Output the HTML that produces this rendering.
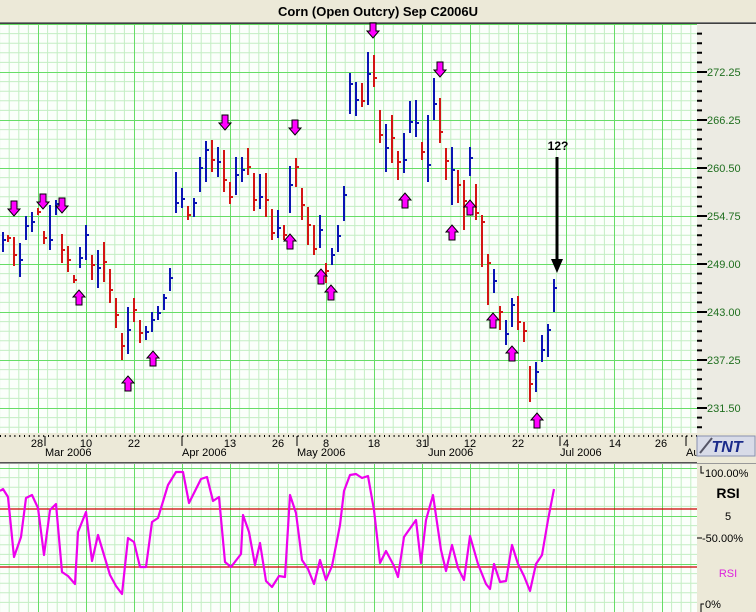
<!DOCTYPE html>
<html><head><meta charset="utf-8"><style>
html,body{margin:0;padding:0;width:756px;height:612px;overflow:hidden;background:#ece9d8;font-family:"Liberation Sans",Arial,sans-serif}
svg{display:block}
</style></head><body>
<svg width="756" height="612" xmlns="http://www.w3.org/2000/svg">
<defs>
<pattern id="g1" patternUnits="userSpaceOnUse" x="38" y="24" width="48" height="48">
<rect width="48" height="48" fill="#fbfffb"/>
<path d="M9.6 0V48M19.2 0V48M28.8 0V48M38.4 0V48M0 9.6H48M0 19.2H48M0 28.8H48M0 38.4H48" stroke="#c4eec4" stroke-width="1"/>
<path d="M0.5 0V48M0 0.5H48" stroke="#66dd66" stroke-width="1"/>
</pattern>
<pattern id="g2" patternUnits="userSpaceOnUse" x="38" y="468" width="48" height="48">
<rect width="48" height="48" fill="#fbfffb"/>
<path d="M9.6 0V48M19.2 0V48M28.8 0V48M38.4 0V48M0 9.6H48M0 19.2H48M0 28.8H48M0 38.4H48" stroke="#c4eec4" stroke-width="1"/>
<path d="M0.5 0V48M0 0.5H48" stroke="#66dd66" stroke-width="1"/>
</pattern>
<g id="dn"><path d="M-3 -8H3V0H6L0 7L-6 0H-3Z" fill="#ff00ff" stroke="#000" stroke-width="1"/></g>
<g id="up"><path d="M-3 8H3V0H6L0 -7L-6 0H-3Z" fill="#ff00ff" stroke="#000" stroke-width="1"/></g>
</defs>
<!-- title -->
<rect x="0" y="0" width="756" height="22" fill="#ece9d8"/>
<line x1="0" y1="22.5" x2="756" y2="22.5" stroke="#808080"/>
<line x1="0" y1="23.5" x2="756" y2="23.5" stroke="#404040"/>
<text x="378" y="16" font-size="13" font-weight="bold" text-anchor="middle" fill="#000">Corn (Open Outcry) Sep C2006U</text>
<!-- chart -->
<rect x="0" y="24" width="697" height="409" fill="url(#g1)"/>
<rect x="697" y="24" width="59" height="409" fill="#ecebe3"/>
<path d="M697 33.6h5M697 43.2h5M697 52.8h5M697 62.4h5M697 72h10M697 81.6h5M697 91.2h5M697 100.8h5M697 110.4h5M697 120h10M697 129.6h5M697 139.2h5M697 148.8h5M697 158.4h5M697 168h10M697 177.6h5M697 187.2h5M697 196.8h5M697 206.4h5M697 216h10M697 225.6h5M697 235.2h5M697 244.8h5M697 254.4h5M697 264h10M697 273.6h5M697 283.2h5M697 292.8h5M697 302.4h5M697 312h10M697 321.6h5M697 331.2h5M697 340.8h5M697 350.4h5M697 360h10M697 369.6h5M697 379.2h5M697 388.8h5M697 398.4h5M697 408h10M697 417.6h5M697 427.2h5" stroke="#000" stroke-width="2"/>
<g font-size="11" fill="#1f6f1f">
<text x="707" y="76">272.25</text><text x="707" y="124">266.25</text><text x="707" y="172">260.50</text><text x="707" y="220">254.75</text><text x="707" y="268">249.00</text><text x="707" y="316">243.00</text><text x="707" y="364">237.25</text><text x="707" y="412">231.50</text>
</g>
<!-- bars -->
<path fill="none" stroke="#0a14b4" stroke-width="2" d="M3 232V252M20 243V277M26 216V240M32 212V232M50 205V250M56 200V215M80 247V268M86 225V260M98 250V288M128 307V354M146 326V340M152 312V332M158 306V320M164 294V310M170 268V291M176 172V213M182 188V208M194 198V217M200 157V192M206 141V182M218 147V177M236 157V195M242 157V182M260 174V209M278 210V238M290 166V213M320 215V248M332 248V265M338 225V252M344 186V221M350 73V114M356 82V116M368 52V105M386 124V172M404 133V173M410 101V133M416 100V137M428 115V182M434 78V120M452 147V205M470 147V176M494 269V293M506 320V345M512 298V327M536 362V392M542 335V362M548 324V357M554 279V312"/>
<path fill="none" stroke="#0a14b4" stroke-width="2" d="M3 240h3M20 260h3M26 226h3M32 222h3M50 240h3M56 204h3M80 258h3M86 235h3M98 268h3M128 330h3M146 332h3M152 320h3M158 313h3M164 298h3M170 278h3M176 203h3M182 199h3M194 203h3M200 168h3M206 150h3M218 162h3M236 175h3M242 170h3M260 197h3M278 228h3M290 185h3M320 230h3M332 255h3M338 236h3M344 195h3M350 84h3M356 100h3M368 74h3M386 148h3M404 160h3M410 122h3M416 123h3M428 165h3M434 104h3M452 170h3M470 158h3M494 281h3M506 334h3M512 305h3M536 372h3M542 350h3M548 330h3M554 288h3"/>
<path fill="none" stroke="#d41414" stroke-width="2" d="M8 235V242M14 237V266M38 208V215M44 231V244M62 234V263M68 246V272M74 275V283M92 255V280M104 242V282M110 269V303M116 298V328M122 333V360M134 298V322M140 320V343M188 206V220M212 140V172M224 150V192M230 182V204M248 148V175M254 173V211M266 173V217M272 209V240M284 225V240M296 158V187M302 188V220M308 207V245M314 225V255M326 263V283M362 83V107M374 55V87M380 110V143M392 115V163M398 151V180M422 142V160M440 98V143M446 148V180M458 170V203M464 180V230M476 184V220M482 215V267M488 254V305M500 306V330M518 296V330M524 322V342M530 366V402"/>
<path fill="none" stroke="#d41414" stroke-width="2" d="M8 238h3M14 255h3M38 212h3M44 238h3M62 250h3M68 260h3M74 280h3M92 265h3M104 262h3M110 290h3M116 315h3M122 346h3M134 310h3M140 333h3M188 215h3M212 160h3M224 180h3M230 197h3M248 167h3M254 200h3M266 200h3M272 233h3M284 235h3M296 167h3M302 205h3M308 225h3M314 249h3M326 271h3M362 101h3M374 78h3M380 135h3M392 138h3M398 162h3M422 152h3M440 132h3M446 161h3M458 185h3M464 201h3M476 213h3M482 222h3M488 263h3M500 312h3M518 322h3M524 331h3M530 384h3"/>
<!-- arrows -->
<use href="#dn" x="14" y="209"/><use href="#dn" x="43" y="202"/><use href="#dn" x="62" y="206"/><use href="#dn" x="225" y="123"/><use href="#dn" x="295" y="128"/><use href="#dn" x="373" y="31"/><use href="#dn" x="440" y="70"/>
<use href="#up" x="79" y="297"/><use href="#up" x="128" y="383"/><use href="#up" x="153" y="358"/><use href="#up" x="290" y="241"/><use href="#up" x="321" y="276"/><use href="#up" x="331" y="292"/><use href="#up" x="405" y="200"/><use href="#up" x="452" y="232"/><use href="#up" x="470" y="207"/><use href="#up" x="493" y="320"/><use href="#up" x="512" y="353"/><use href="#up" x="537" y="420"/>
<!-- big arrow -->
<path d="M557 157V262" stroke="#000" stroke-width="3"/>
<path d="M551 259H563L557 273Z" fill="#000"/>
<text x="558" y="150" font-size="12" font-weight="bold" text-anchor="middle">12?</text>
<!-- date axis -->
<rect x="0" y="433" width="697" height="29" fill="#ece9d8"/>
<line x1="0" y1="462.5" x2="697" y2="462.5" stroke="#555"/>
<line x1="0" y1="436" x2="697" y2="436" stroke="#000" stroke-width="2" stroke-dasharray="1 3.8"/>
<path d="M45 436v10M182 436v10M297 436v10M428 436v10M560 436v10M686 436v10" stroke="#000"/>
<g font-size="11" fill="#000" text-anchor="middle">
<text x="37" y="447">28</text><text x="86" y="447">10</text><text x="134" y="447">22</text><text x="230" y="447">13</text><text x="278" y="447">26</text><text x="326" y="447">8</text><text x="374" y="447">18</text><text x="422" y="447">31</text><text x="470" y="447">12</text><text x="518" y="447">22</text><text x="566" y="447">4</text><text x="615" y="447">14</text><text x="661" y="447">26</text>
</g>
<g font-size="11" fill="#000">
<text x="45" y="456">Mar 2006</text><text x="182" y="456">Apr 2006</text><text x="297" y="456">May 2006</text><text x="428" y="456">Jun 2006</text><text x="560" y="456">Jul 2006</text><text x="686" y="456">Au</text>
</g>
<!-- TNT logo -->
<rect x="697" y="436" width="58" height="20" fill="#d8dbe8" stroke="#8890b0"/>
<text x="727" y="452" font-size="16" font-weight="bold" font-style="italic" fill="#1a2a8a" text-anchor="middle">TNT</text>
<path d="M700 453L712 438" stroke="#556" stroke-width="2"/>
<!-- RSI panel -->
<rect x="0" y="464" width="697" height="148" fill="url(#g2)"/>
<line x1="0" y1="509" x2="697" y2="509" stroke="#cc0000" stroke-width="1.2"/>
<line x1="0" y1="567" x2="697" y2="567" stroke="#cc0000" stroke-width="1.2"/>
<line x1="0" y1="463.5" x2="756" y2="463.5" stroke="#999"/>
<rect x="697" y="464" width="59" height="148" fill="#ece9d8"/>
<path d="M701 466V473h3M697 538h5M701 612V604h3" stroke="#000" fill="none"/>
<g font-size="11" fill="#000">
<text x="705" y="477">100.00%</text><text x="702" y="542">-50.00%</text><text x="705" y="608">0%</text>
<text x="728" y="520" text-anchor="middle">5</text>
</g>
<text x="728" y="498" font-size="14" font-weight="bold" text-anchor="middle">RSI</text>
<text x="728" y="577" font-size="11" fill="#dd22dd" text-anchor="middle">RSI</text>
<polyline fill="none" stroke="#ee00ee" stroke-width="2.2" stroke-linejoin="round" points="0,491 3,489 8,497 14,557 21,537 26,498 32,495 38,508 44,555 50,510 56,504 62,572 68,576 75,584 78,532 86,512 92,561 98,535 104,555 110,575 116,586 122,594 128,538 134,542 140,567 146,567 152,522 158,518 168,485 176,472 183,472 189,503 201,479 207,477 213,501 219,497 225,562 231,567 241,554 243,515 249,532 255,565 260,543 266,581 272,587 279,576 285,577 290,495 296,513 302,560 308,569 314,584 320,560 326,580 332,566 340,525 344,491 350,475 356,474 362,478 368,476 374,510 380,563 386,551 394,566 398,577 404,537 416,520 421,563 426,520 433,495 441,550 446,571 452,545 458,568 464,580 470,536 478,564 486,584 490,589 494,564 500,582 506,581 512,545 518,564 524,576 530,591 536,564 542,555 548,520 554,489"/>
</svg>
</body></html>
